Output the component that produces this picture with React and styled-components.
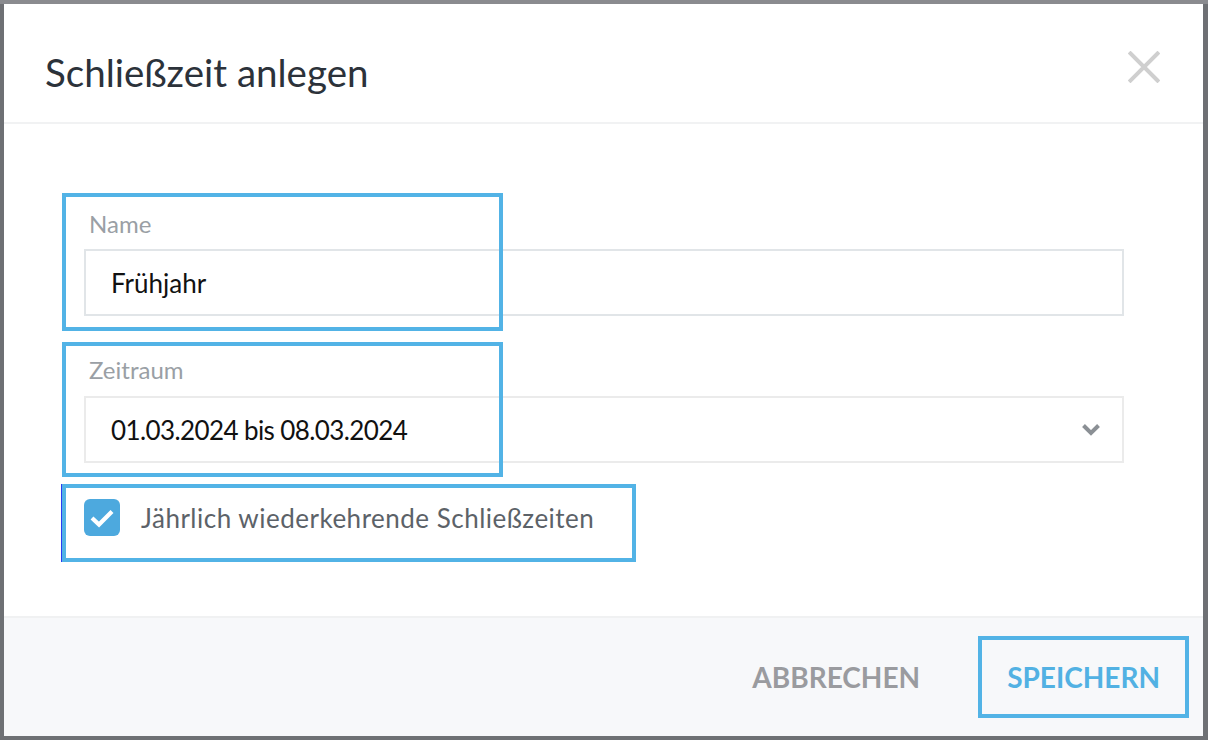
import React from "react";
import styled, { createGlobalStyle } from "styled-components";

const Global = createGlobalStyle`
  html, body { margin: 0; padding: 0; }
  body {
    background: linear-gradient(to bottom, #8a8b8f 0, #8a8b8f 4px, #6e7074 4px);
    font-family: Lato, "Open Sans", sans-serif;
    width: 1208px;
    height: 740px;
    overflow: hidden;
  }
`;

const Modal = styled.div`
  margin: 4px 0 0 4px;
  width: 1199px;
  height: 732px;
  background: #fff;
  display: flex;
  flex-direction: column;
`;

const Header = styled.div`
  box-sizing: border-box;
  height: 120px;
  padding: 47px 43px 0 41px;
  border-bottom: 2px solid #f1f2f3;
  display: flex;
  justify-content: space-between;
  align-items: flex-start;
`;

const Title = styled.h1`
  margin: 2px 0 0;
  font-size: 38.5px;
  line-height: 1;
  font-weight: 400;
  color: #2c323a;
`;

const CloseButton = styled.button`
  border: 0;
  background: none;
  padding: 0;
  width: 32px;
  height: 32px;
  cursor: pointer;
  display: block;
`;

const Body = styled.div`
  flex: 1;
  padding: 88px 79px 0 80px;
`;

const FieldGroup = styled.div`
  position: relative;
  margin-bottom: ${(p) => p.$mb || 0}px;
`;

const Label = styled.div`
  font-size: 24px;
  line-height: 1;
  color: #9a9fa5;
  margin-bottom: ${(p) => p.$gap || 13}px;
  padding-left: 5px;
`;

const InputBox = styled.div`
  box-sizing: border-box;
  height: 67px;
  border: 2px solid ${(p) => p.$border || "#e1e5e8"};
  display: flex;
  align-items: center;
  justify-content: space-between;
  padding: 0 21px 0 25px;
  font-size: 26px;
  line-height: 1;
  color: #111;
`;

const DateText = styled.span`
  letter-spacing: -0.6px;
`;

const Highlight = styled.div`
  position: absolute;
  box-sizing: border-box;
  border: 4px solid #52b3e6;
  pointer-events: none;
`;

const CheckRow = styled.label`
  position: relative;
  display: flex;
  align-items: center;
  gap: 21px;
  margin-top: 36px;
  font-size: 26px;
  letter-spacing: 0.5px;
  line-height: 1;
  color: #5c6268;
`;

const CheckBox = styled.span`
  width: 36px;
  height: 37px;
  border-radius: 6px;
  background: #4da9de;
  display: flex;
  align-items: center;
  justify-content: center;
`;

const Footer = styled.div`
  box-sizing: border-box;
  height: 120px;
  border-top: 2px solid #f0f1f2;
  background: #f7f8fa;
  display: flex;
  align-items: center;
  justify-content: flex-end;
  gap: 29px;
  padding: 0 14px 0 0;
`;

const Button = styled.button`
  box-sizing: border-box;
  height: 82px;
  padding: 0 25px;
  background: transparent;
  border: 4px solid ${(p) => (p.$primary ? "#52b3e6" : "transparent")};
  color: ${(p) => (p.$primary ? "#52b1e3" : "#9a9b9f")};
  font-family: Lato, "Open Sans", sans-serif;
  font-size: 28px;
  font-weight: 700;
  letter-spacing: 0;
  cursor: pointer;
`;

export default function App() {
  return (
    <>
      <Global />
      <Modal>
        <Header>
          <Title>Schließzeit anlegen</Title>
          <CloseButton aria-label="Schließen">
            <svg width="32" height="32" viewBox="0 0 32 32">
              <path d="M2.5 2.5 L29.5 29.5 M29.5 2.5 L2.5 29.5" stroke="#cfcfcf" strokeWidth="4" strokeLinecap="square" />
            </svg>
          </CloseButton>
        </Header>
        <Body>
          <FieldGroup $mb={42}>
            <Highlight style={{ left: -22, top: -19, width: 441, height: 138 }} />
            <Label>Name</Label>
            <InputBox>Frühjahr</InputBox>
          </FieldGroup>
          <FieldGroup>
            <Highlight style={{ left: -22, top: -16, width: 441, height: 135 }} />
            <Label $gap={14}>Zeitraum</Label>
            <InputBox $border="#ebebeb">
              <DateText>01.03.2024 bis 08.03.2024</DateText>
              <svg width="20" height="13" viewBox="0 0 20 13">
                <path d="M2.5 2.5 L10 10 L17.5 2.5" fill="none" stroke="#8b9095" strokeWidth="4" />
              </svg>
            </InputBox>
          </FieldGroup>
          <CheckRow>
            <Highlight style={{ left: -22, top: -15, width: 574, height: 78, boxShadow: "-1px 0 0 #2a3cf0" }} />
            <CheckBox>
              <svg width="26" height="20" viewBox="0 0 26 20">
                <path d="M3 10 L10 16.5 L23 3.5" fill="none" stroke="#fff" strokeWidth="4.2" />
              </svg>
            </CheckBox>
            Jährlich wiederkehrende Schließzeiten
          </CheckRow>
        </Body>
        <Footer>
          <Button>ABBRECHEN</Button>
          <Button $primary>SPEICHERN</Button>
        </Footer>
      </Modal>
    </>
  );
}
